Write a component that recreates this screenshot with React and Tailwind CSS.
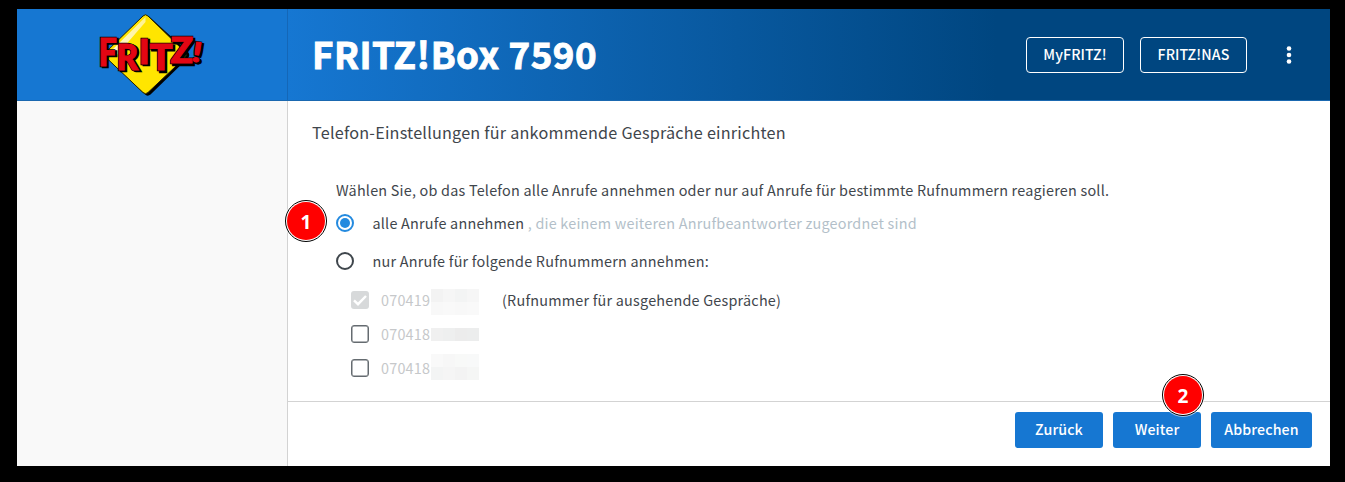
import React from 'react';

const glyphs = [
  { c: 'F', x: 98.5, y: 65.5, sx: 0.84, size: 38.5, r: 0 },
  { c: 'R', x: 116.5, y: 69.5, sx: 0.9, size: 37, r: 0 },
  { c: 'I', x: 139, y: 63.5, sx: 1, size: 34.5, r: 0 },
  { c: 'T', x: 149.5, y: 70, sx: 1.03, size: 37, r: 0 },
  { c: 'Z', x: 170.5, y: 63, sx: 1.03, size: 36, r: 0 },
  { c: '!', x: 191, y: 61, sx: 1.2, size: 27, r: 9 },
];

function Logo() {
  const letter = (g, i, dx, dy, fill) => (
    <text
      key={i}
      transform={`translate(${g.x + dx} ${g.y + dy}) rotate(${g.r}) scale(${g.sx} 1)`}
      fontSize={g.size}
      fill={fill}
      stroke={fill}
      strokeWidth={fill === '#000' ? 2.4 : 1.1}
      className="font-['Lato'] font-black tracking-normal"
    >
      {g.c}
    </text>
  );
  return (
    <svg viewBox="97 9 110 92" className="ml-[80px] h-[92px] w-[110px]">
      <defs>
        <linearGradient id="gloss" x1="0" y1="1" x2="1" y2="0">
          <stop offset="0" stopColor="#fffbe0" />
          <stop offset="1" stopColor="#fff28a" />
        </linearGradient>
      </defs>
      <path d="M148.500 16 L188 52 Q190.500 55 188 58 L150.500 94.500 Q147.500 97 144.500 94 L107 58 Q105 55 107 52Z" fill="#000" />
      <path d="M143 16 Q145.500 13.500 148 16 L185 52 Q187.500 55 185 57.500 L148 92.500 Q145.500 95 143 92.500 L106 57.500 Q103.500 55 106 52Z" fill="#ffe500" stroke="#221f00" strokeWidth="1" />
      <path d="M108 54 L145.500 17 V22 L116 56Z" fill="url(#gloss)" />
      {glyphs.map((g, i) => letter(g, i, 2, 1.5, '#000'))}
      {glyphs.map((g, i) => letter(g, i, 0, 0, '#000'))}
      {glyphs.map((g, i) => letter(g, i, 0, 0, '#e30613'))}
    </svg>
  );
}

function Marker({ children, className }) {
  return (
    <div className={`absolute flex size-[42px] items-center justify-center rounded-full border-[1.5px] border-black bg-white p-px ring-1 ring-white/60 ${className}`}>
      <div className="flex size-full items-center justify-center rounded-full bg-[#ff0000] pt-[2px] font-['Open_Sans',sans-serif] text-[19px] font-bold leading-none tracking-normal text-white">
        {children}
      </div>
    </div>
  );
}

const masks = [
  ['#f3f3f3', '#f6f6f6', '#f3f4f4', '#f6f6f6', '#f8f8f8', '#f9f9f9', '#f8f8f8', '#f9f9f9'],
  ['#f0f0f0', '#eeefef', '#ececec', '#eceded'],
  ['#f9f9f9', '#f7f7f7', '#f8f9f8', '#f8f9f9', '#f3f4f4', '#f5f5f5', '#f3f3f3', '#f5f6f5'],
];

function NumberRow({ prefix, mask, maskClass, checked, note }) {
  return (
    <div className="flex h-[34px] items-center">
      {checked ? (
        <svg viewBox="0 0 18 18" className="size-[18px]">
          <rect width="18" height="18" rx="3" fill="#d7d9da" />
          <path d="M3 9.300 L7 13.200 L15 5" fill="none" stroke="#fff" strokeWidth="2.400" />
        </svg>
      ) : (
        <span className="size-[18px] rounded-[3px] border-[1.5px] border-[#656b70] shadow-[inset_0_0_0_0.5px_#656b70]" />
      )}
      <span className="ml-[12px] w-[50px] whitespace-nowrap text-[#c6c8ca]">{prefix}</span>
      <span className={`grid w-[48px] grid-cols-4 ${maskClass}`}>
        {mask.map((c, i) => (
          <i key={i} className="h-[13px]" style={{ backgroundColor: c }} />
        ))}
      </span>
      {note && <span className="ml-[23px]">{note}</span>}
    </div>
  );
}

const solid = 'flex h-9 items-center justify-center rounded-[3px] bg-[#1677d2] text-[14.2px] font-medium tracking-[0.1px] text-white';
const outline = 'flex h-9 items-center justify-center rounded-[4px] border border-white text-[14.2px] font-medium tracking-[0.1px] text-white';

export default function App() {
  return (
    <div className="h-[482px] w-[1345px] bg-black pt-[9px] pr-[15px] pb-[16px] pl-[17px] font-['Noto_Sans_CJK_SC',sans-serif] text-[14.4px] tracking-[0.215px] text-[#3f464c]">
      <div className="relative flex h-[457px] flex-col bg-white">
        <header className="flex h-[92px] shrink-0 border-b border-[#1a68b0] bg-[linear-gradient(90deg,#1677d2_0px,#1677d2_271px,#004680_980px)]">
          <div className="w-[271px] border-r border-[#1467b8]">
            <Logo />
          </div>
          <div className="flex flex-1 items-center pl-[24px]">
            <h1 className="flex-1 pb-[3px] text-[36.7px] font-bold leading-none tracking-[0.5px] text-white [-webkit-text-stroke:0.9px_white]">FRITZ!Box 7590</h1>
            <button className={`${outline} w-[98px]`}>MyFRITZ!</button>
            <button className={`${outline} ml-4 w-[107px]`}>FRITZ!NAS</button>
            <svg viewBox="0 0 6 18" className="mr-[38px] ml-[39px] h-[18px] w-[6px]" fill="#fff">
              <circle cx="3" cy="2.500" r="2.300" />
              <circle cx="3" cy="9" r="2.300" />
              <circle cx="3" cy="15.500" r="2.300" />
            </svg>
          </div>
        </header>
        <div className="flex min-h-0 flex-1">
          <aside className="w-[271px] shrink-0 border-r border-[#d3d3d3] bg-[#f9f9f9]" />
          <main className="flex flex-1 flex-col whitespace-nowrap">
            <div className="flex-1 pt-[19px] pl-[24px]">
              <h2 className="h-6 text-[16.2px] leading-6">Telefon-Einstellungen für ankommende Gespräche einrichten</h2>
              <div className="pt-[34px] pl-[24px]">
                <p className="h-6 leading-6">Wählen Sie, ob das Telefon alle Anrufe annehmen oder nur auf Anrufe für bestimmte Rufnummern reagieren soll.</p>
                <div className="mt-[2px] flex h-[38px] items-center">
                  <span className="flex size-[18px] items-center justify-center rounded-full border-2 border-[#248adf]">
                    <i className="size-[10px] rounded-full bg-[#248adf]" />
                  </span>
                  <span className="ml-[18.5px]">alle Anrufe annehmen</span>
                  <span className="ml-[3.5px] text-[#b3bfc9]">, die keinem weiteren Anrufbeantworter zugeordnet sind</span>
                </div>
                <div className="flex h-[38px] items-center">
                  <span className="size-[18px] rounded-full border-2 border-[#3f464c]" />
                  <span className="ml-[18.5px]">nur Anrufe für folgende Rufnummern annehmen:</span>
                </div>
                <div className="pt-[3px] pl-[15px]">
                  <NumberRow prefix="070419" mask={masks[0]} maskClass="mt-[4px]" checked note="(Rufnummer für ausgehende Gespräche)" />
                  <NumberRow prefix="070418" mask={masks[1]} maskClass="mt-px" />
                  <NumberRow prefix="070418" mask={masks[2]} maskClass="mb-[2px]" />
                </div>
              </div>
            </div>
            <footer className="flex h-[65px] gap-[10px] border-t border-[#d3d3d3] pt-[10px] pr-[18px]">
              <button className={`${solid} ml-auto w-[88px]`}>Zurück</button>
              <button className={`${solid} w-[88px]`}>Weiter</button>
              <button className={`${solid} w-[101px]`}>Abbrechen</button>
            </footer>
          </main>
        </div>
        <Marker className="top-[191px] left-[268px]">1</Marker>
        <Marker className="top-[365px] left-[1145px]">2</Marker>
      </div>
    </div>
  );
}
